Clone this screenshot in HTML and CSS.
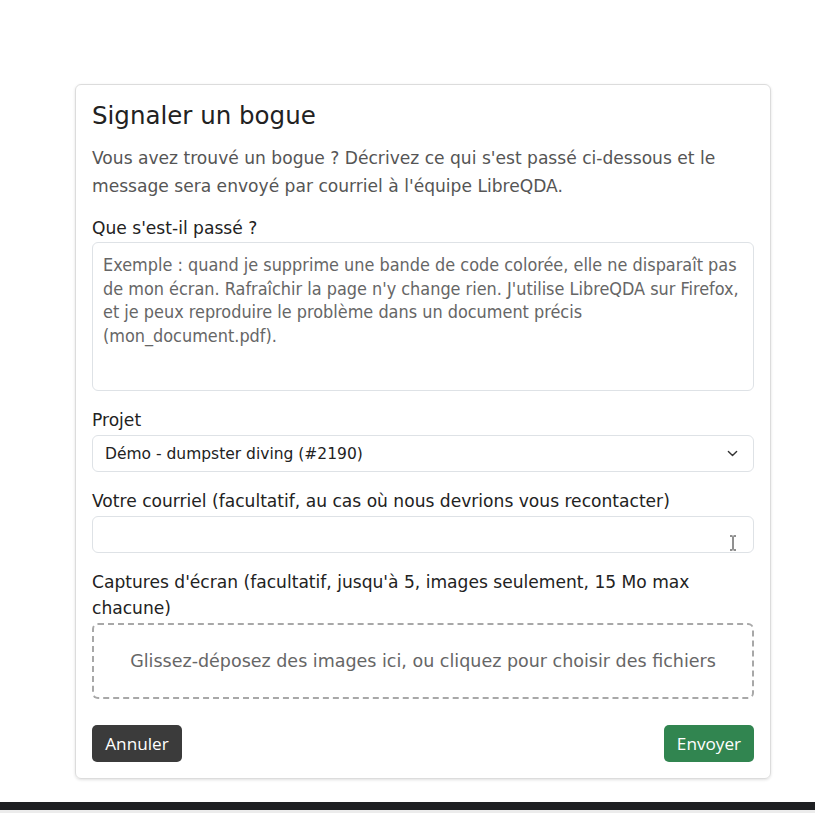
FILE: index.html
```html
<!DOCTYPE html>
<html lang="fr">
<head>
<meta charset="utf-8">
<title>Signaler un bogue</title>
<link rel="stylesheet" href="styles.css">
</head>
<body>
<main class="page">
  <section class="card">
    <h1 class="title">Signaler un bogue</h1>
    <p class="lead">Vous avez trouvé un bogue ? Décrivez ce qui s'est passé ci-dessous et le message sera envoyé par courriel à l'équipe LibreQDA.</p>
    <label class="label" for="what">Que s'est-il passé ?</label>
    <textarea id="what" class="textarea" placeholder="Exemple : quand je supprime une bande de code colorée, elle ne disparaît pas de mon écran. Rafraîchir la page n'y change rien. J'utilise LibreQDA sur Firefox, et je peux reproduire le problème dans un document précis (mon_document.pdf)."></textarea>
    <label class="label label-gap" for="proj">Projet</label>
    <div class="select">
      <span>Démo - dumpster diving (#2190)</span>
      <svg class="chev" width="11" height="11" viewBox="0 0 16 16"><path d="M2 5l6 6 6-6" fill="none" stroke="#333" stroke-width="2" stroke-linecap="round" stroke-linejoin="round"/></svg>
    </div>
    <label class="label label-gap" for="mail">Votre courriel (facultatif, au cas où nous devrions vous recontacter)</label>
    <div class="input-wrap">
      <input id="mail" class="input" type="text">
      <svg class="ibeam" width="8" height="16" viewBox="0 0 8 16"><path d="M1 1h2.5M4.5 1H7M4 1.5v13M1 15h2.5M4.5 15H7" fill="none" stroke="#222" stroke-width="1"/></svg>
    </div>
    <label class="label label-gap label-drop">Captures d'écran (facultatif, jusqu'à 5, images seulement, 15 Mo max chacune)</label>
    <div class="drop">Glissez-déposez des images ici, ou cliquez pour choisir des fichiers</div>
    <div class="actions">
      <button class="btn btn-dark">Annuler</button>
      <button class="btn btn-green">Envoyer</button>
    </div>
  </section>
</main>
<div class="bar"></div>
</body>
</html>
```
FILE: styles.css
```css
html, body { margin: 0; padding: 0; background: #fff; }
body { font-family: "DejaVu Sans", sans-serif; color: #222; }
.page { padding-top: 84px; padding-left: 75px; }
.card {
  width: 696px;
  box-sizing: border-box;
  border: 1px solid #dcdcdc;
  border-radius: 6px;
  padding: 14px 16px 16px 16px;
  box-shadow: 0 1px 3px rgba(0,0,0,0.12);
}
.title { margin: 0 0 11px 0; font-size: 24.5px; font-weight: 500; line-height: 34px; color: #222; }
.lead { margin: 0 0 15px 0; font-size: 17.1px; line-height: 28px; color: #555; }
.label { display: block; font-size: 17.1px; line-height: 26px; color: #222; margin-bottom: 1px; }
.label-gap { margin-top: 16px; margin-bottom: 2px; }
.label-drop { margin-bottom: 2px; }
.textarea {
  display: block;
  width: 100%; box-sizing: border-box; height: 149px;
  border: 1px solid #dee2e6; border-radius: 6px;
  padding: 10px 10px; resize: none;
  font-family: "DejaVu Sans Condensed", "DejaVu Sans", sans-serif; font-size: 17.9px; line-height: 23.7px; color: #222;
}
.textarea::placeholder { color: #666; }
.select {
  display: flex; align-items: center; justify-content: space-between;
  height: 37px; box-sizing: border-box;
  border: 1px solid #dee2e6; border-radius: 6px;
  padding: 0 15px 0 12px;
  font-size: 15.5px; color: #222;
}
.input-wrap { position: relative; }
.input {
  display: block; width: 100%; box-sizing: border-box; height: 37px;
  border: 1px solid #dee2e6; border-radius: 6px; padding: 0 12px;
  font-family: inherit; font-size: 15.5px;
}
.ibeam { position: absolute; left: 637px; top: 19px; }
.drop {
  height: 76px; box-sizing: border-box;
  border: 2px dashed #a8a8a8; border-radius: 6px;
  display: flex; align-items: center; justify-content: center;
  font-size: 17.5px; color: #666;
}
.actions { display: flex; justify-content: space-between; margin-top: 26px; }
.btn {
  font-family: "Open Sans", sans-serif; font-size: 17.2px; color: #fff;
  border: none; border-radius: 5px; height: 37px; padding: 0 12px; width: 90px;
}
.btn-dark { background: #3b3b3b; }
.btn-green { background: #318550; }
.bar { margin-top: 23px; height: 8px; background: #1e1f22; border-bottom: 3px solid #ececec; }
```
